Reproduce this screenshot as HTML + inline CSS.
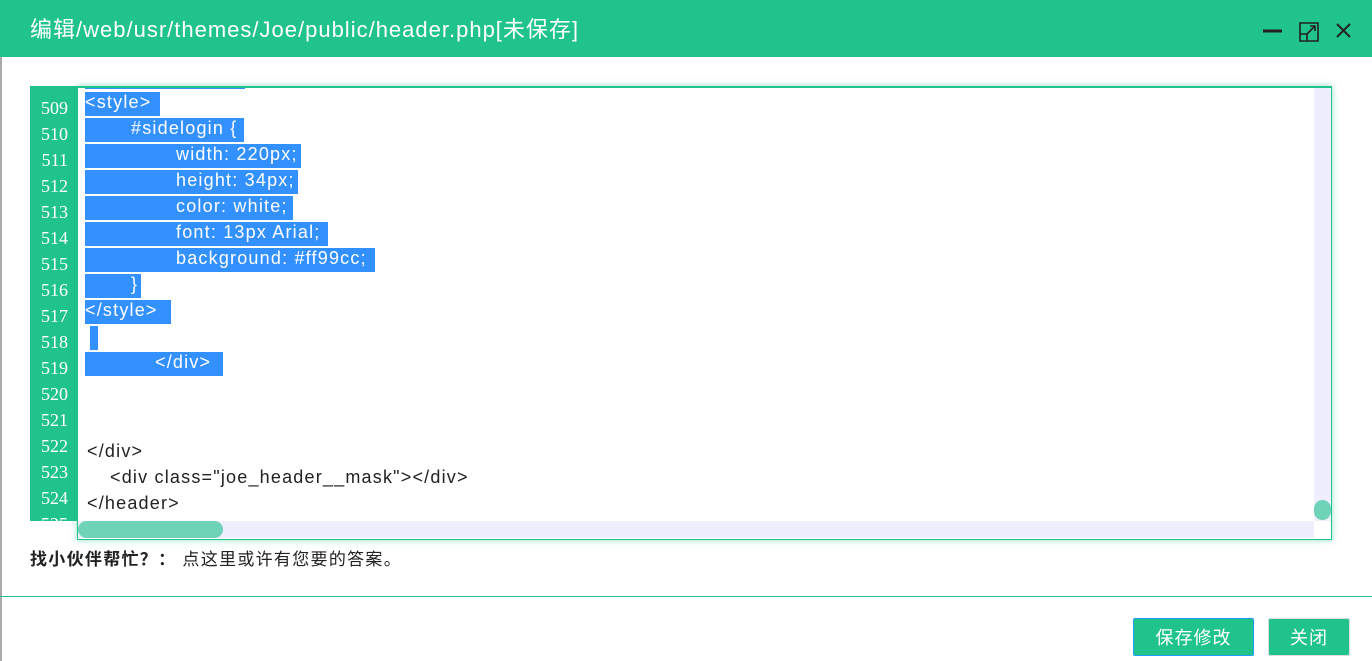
<!DOCTYPE html>
<html><head><meta charset="utf-8"><style>
body{margin:0;width:1372px;height:661px;background:#fff;position:relative;overflow:hidden;font-family:"Liberation Sans","Noto Sans CJK SC",sans-serif}
.hdr{position:absolute;left:0;top:0;width:1372px;height:57px;background:#20c38b}
.hdr .t{position:absolute;left:30px;top:15px;color:#fff;font-size:22px;line-height:30px;letter-spacing:1px}
.lstrip{position:absolute;left:0;top:57px;width:2px;height:604px;background:#aaa}
.gut{position:absolute;left:30px;top:86px;width:47px;height:435px;background:#20c38b;overflow:hidden}
.gut div{position:absolute;right:9px;color:#fff;font-family:"Liberation Serif",serif;font-size:18px}
.ed{position:absolute;left:77px;top:86px;width:1253px;height:451px;border:1px solid #20c38b;border-top-width:2px;box-shadow:0 0 6px rgba(32,195,139,.5);overflow:hidden;background:#fff}
.vs{position:absolute;right:0;top:0;width:17px;height:433px;background:#eeeefc}
.vt{position:absolute;right:0;top:412px;width:17px;height:20px;border-radius:9px;background:#6fd3b8}
.hs{position:absolute;left:0;top:433px;width:1236px;height:17px;background:#eeeefc}
.ht{position:absolute;left:0;top:433px;width:145px;height:17px;border-radius:9px;background:#6fd3b8}
.ln{position:absolute;font-size:18px;line-height:22px;white-space:pre;color:#222;letter-spacing:1.2px}
.sel{background:#3390ff;color:#fff;height:24px;line-height:20px}
.help{position:absolute;left:30px;top:545px;font-size:17px;color:#222;letter-spacing:1.3px}
.div{position:absolute;left:0;top:596px;width:1372px;height:1px;background:#20c38b}
.btn{position:absolute;top:618px;height:38px;background:#20c38b;color:#fff;font-size:18px;text-align:center;line-height:38px;border-radius:2px;box-sizing:border-box;letter-spacing:1px}
</style></head><body>
<div class="hdr"><div class="t">编辑/web/usr/themes/Joe/public/header.php[未保存]</div>
<svg style="position:absolute;left:1260px;top:18px" width="100" height="26" viewBox="0 0 100 26" fill="none" stroke="#222" stroke-width="2">
<line x1="3" y1="13" x2="22" y2="13" stroke-width="3"/>
<path d="M40 5h18v18h-18z M40 16h7v7" stroke-width="1.6"/>
<path d="M46 17l9-9M50 8h5v5" stroke-width="1.6"/>
<path d="M77 6l13 13M90 6l-13 13"/>
</svg></div>
<div class="lstrip"></div>
<div class="gut">
<div style="top:12px">509</div><div style="top:38px">510</div><div style="top:64px">511</div><div style="top:90px">512</div><div style="top:116px">513</div><div style="top:142px">514</div><div style="top:168px">515</div><div style="top:194px">516</div><div style="top:220px">517</div><div style="top:246px">518</div><div style="top:272px">519</div><div style="top:298px">520</div><div style="top:324px">521</div><div style="top:350px">522</div><div style="top:376px">523</div><div style="top:402px">524</div><div style="top:428px">525</div>
</div>
<div class="ed">
<div style="position:absolute;left:7px;top:-2px;width:160px;height:3px;background:#3390ff"></div>
<div class="ln sel" style="left:7px;top:4px;width:75px">&lt;style&gt;</div>
<div class="ln sel" style="left:7px;top:30px;width:159px"><span style="padding-left:46px">#sidelogin {</span></div>
<div class="ln sel" style="left:7px;top:56px;width:216px"><span style="padding-left:91px">width: 220px;</span></div>
<div class="ln sel" style="left:7px;top:82px;width:213px"><span style="padding-left:91px">height: 34px;</span></div>
<div class="ln sel" style="left:7px;top:108px;width:208px"><span style="padding-left:91px">color: white;</span></div>
<div class="ln sel" style="left:7px;top:134px;width:243px"><span style="padding-left:91px">font: 13px Arial;</span></div>
<div class="ln sel" style="left:7px;top:160px;width:290px"><span style="padding-left:91px">background: #ff99cc;</span></div>
<div class="ln sel" style="left:7px;top:186px;width:56px"><span style="padding-left:46px">}</span></div>
<div class="ln sel" style="left:7px;top:212px;width:86px">&lt;/style&gt;</div>
<div class="ln sel" style="left:12px;top:238px;width:8px"> </div>
<div class="ln sel" style="left:7px;top:264px;width:138px"><span style="padding-left:70px">&lt;/div&gt;</span></div>
<div class="ln" style="left:9px;top:352px">&lt;/div&gt;</div>
<div class="ln" style="left:32px;top:378px">&lt;div class="joe_header__mask"&gt;&lt;/div&gt;</div>
<div class="ln" style="left:9px;top:404px">&lt;/header&gt;</div>
<div class="vs"></div><div class="vt"></div><div class="hs"></div><div class="ht"></div>
</div>
<div class="help"><b>找小伙伴帮忙？：</b> 点这里或许有您要的答案。</div>
<div class="div"></div>
<div class="btn" style="left:1133px;width:121px;border:1px solid #1e9fff">保存修改</div>
<div class="btn" style="left:1268px;width:82px;border:1px solid #ddd">关闭</div>
</body></html>
